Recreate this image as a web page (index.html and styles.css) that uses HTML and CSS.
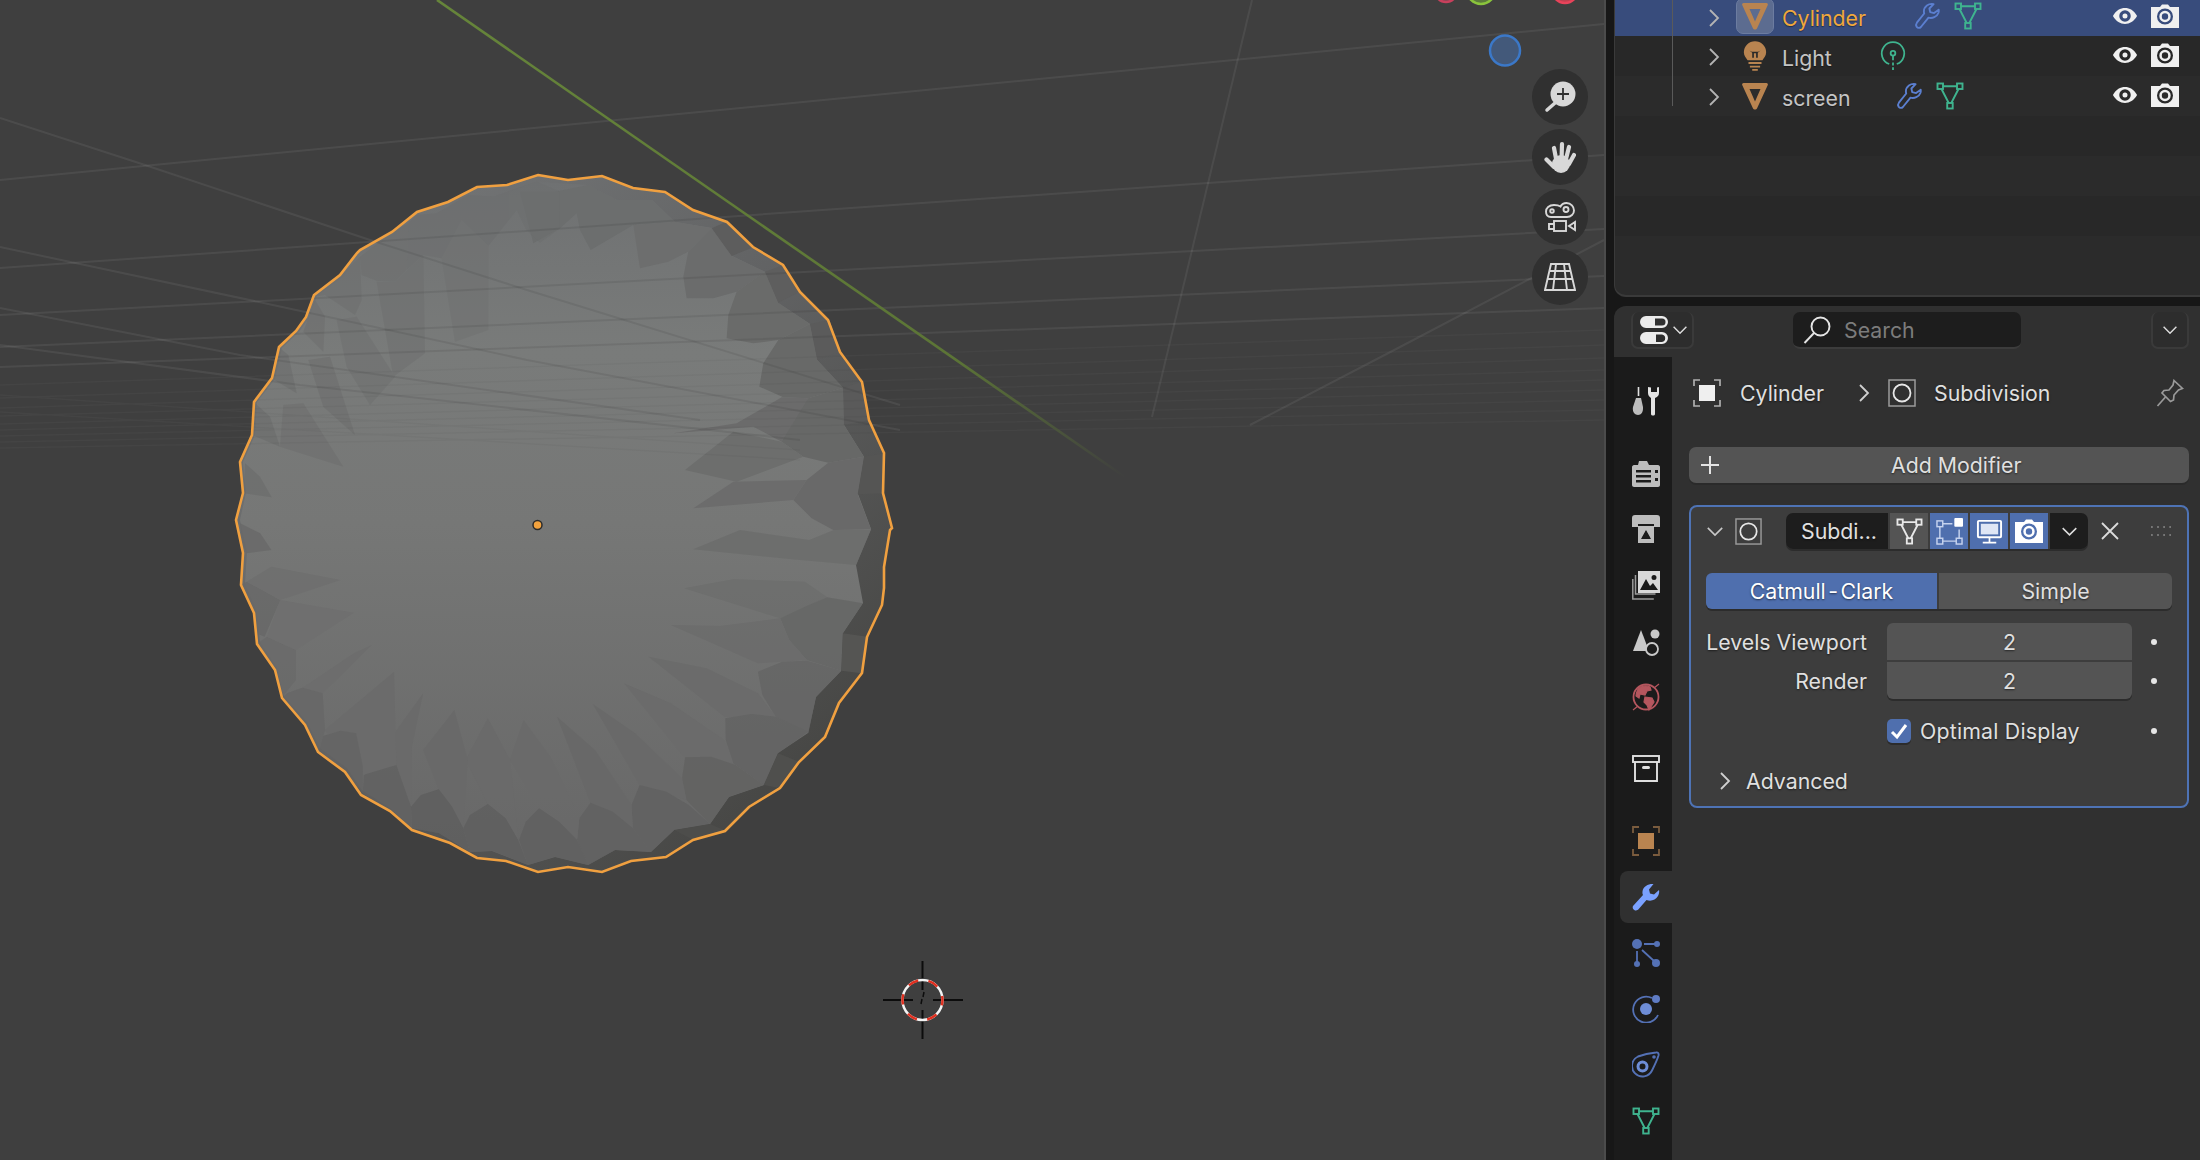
FILE: index.html
```html
<!DOCTYPE html>
<html lang="en">
<head>
<meta charset="utf-8">
<title>Blender</title>
<link rel="stylesheet" href="styles.css">
</head>
<body>
<svg class="defs" width="0" height="0" aria-hidden="true">
  <defs>
    <symbol id="mesh" viewBox="0 0 28 28"><g fill="none" stroke="currentColor" stroke-width="1.9"><rect x="1.5" y="1.5" width="5.5" height="5.5"/><rect x="21" y="1.5" width="5.5" height="5.5"/><rect x="11.2" y="21" width="5.5" height="5.5"/><path d="M7 4.2h14M5.5 7l7.2 14M22.500 7l-7.200 14"/></g></symbol>
    <symbol id="wrench" viewBox="0 0 28 28"><path d="M2.6 24.6c1.2 1.6 3 1.7 4.3.4l7.6-9.3c3.8 1 8.4-.6 10-5 .3-1 .4-2 .2-3l-4.6 3.4-3.9-1-.8-3.6 4.2-4.4c-4.800-1-9.800 2.400-9.700 7.400 0 .8.100 1.300.3 2L2.900 20.700c-.9 1.200-1.100 2.700-.3 3.900z" fill="none" stroke="currentColor" stroke-width="1.9" stroke-linejoin="round"/></symbol>
    <symbol id="tri" viewBox="0 0 28 28"><path fill-rule="evenodd" d="M2.500 1h23c1 0 1.700 1 1.300 2L16.200 26c-.9 2-3.500 2-4.400 0L1.200 3C.800 2 1.500 1 2.500 1zM8.500 7l5.500 12.500L19.500 7z" fill="currentColor"/></symbol>
    <symbol id="chev" viewBox="0 0 12 20"><path d="M2 2l8 8-8 8" fill="none" stroke="currentColor" stroke-width="1.800"/></symbol>
    <symbol id="down" viewBox="0 0 20 12"><path d="M2 2l8 8 8-8" fill="none" stroke="currentColor" stroke-width="1.800"/></symbol>
    <symbol id="eye" viewBox="0 0 28 22"><path fill-rule="evenodd" d="M1 11C4.500 5 9 2.500 14 2.500S23.500 5 27 11c-3.500 6-8 8.500-13 8.500S4.500 17 1 11zM14 4.800a6.200 6.200 0 1 0 0 12.400 6.200 6.200 0 0 0 0-12.400zM14 8.300a2.700 2.700 0 1 1 0 5.400 2.700 2.700 0 0 1 0-5.400z" fill="currentColor"/></symbol>
    <symbol id="cam" viewBox="0 0 28 24"><path fill-rule="evenodd" d="M9 3l2-2.500h6L19 3h9v21H0V3zM14 4.500a8 8 0 1 0 0 16 8 8 0 0 0 0-16zM14 6.800a5.700 5.700 0 1 1 0 11.400 5.700 5.700 0 0 1 0-11.400zM14 9.300a3.200 3.200 0 1 0 0 6.400 3.200 3.200 0 0 0 0-6.400z" fill="currentColor"/></symbol>
    <symbol id="box" viewBox="0 0 28 28"><rect x="1" y="1" width="26" height="26" fill="none" stroke="#9a9a9a" stroke-width="1.500"/><circle cx="14" cy="14" r="8.500" fill="none" stroke="#e6e6e6" stroke-width="1.800"/></symbol>
  </defs>
</svg>

<main class="viewport">
  <svg class="scene" viewBox="0 0 1604 1160" width="1604" height="1160">
    <defs>
      <g id="grid">
        <path d="M0 180L1604 24M0 268L1604 155M0 315L1604 229M0 347L1604 276M0 367L1604 308"/>
        <path d="M0 118L145 165L370 240L527 290L900 405M0 247L259 302L527 360L900 430M0 308L240 355L700 420M0 345L300 385L800 440"/>
        <path d="M1252 0L1152 417M1604 240L1400 347L1250 425"/>
        <path class="faint" d="M0 385L1604 330M0 398L1604 345M0 408L1604 358M0 416L1604 370M0 424L1604 380M0 430L1604 390M0 436L1604 400M0 442L1604 410M0 448L1604 420M0 395L800 450M0 412L800 460"/>
      </g>
      <polygon id="silhouette" points="538,175 568,180 602,176 633,188 665,192 693,210 727,222 753,247 783,265 800,292 828,320 840,352 862,382 869,420 884,453 883,493 892,528 890,530 884,567 884,588 882,605 867,637 862,673 839,703 825,737 799,762 780,788 749,807 725,831 693,840 666,857 631,861 602,872 568,867 538,872 506,861 477,858 450,843 412,830 390,811 361,795 345,772 318,752 305,725 282,698 275,670 257,644 254,613 241,585 243,553 236,520 243,493 240,462 252,435 254,402 272,378 279,347 296,331 306,317 314,295 340,275 357,253 360,250 392,232 417,212 448,202 477,187 507,185"/>
      <clipPath id="clip-disc"><use href="#silhouette"/></clipPath>
      <linearGradient id="rim" x1="0" y1="0.2" x2="0.7" y2="1"><stop offset="0" stop-color="#747677"/><stop offset="0.45" stop-color="#626364"/><stop offset="1" stop-color="#474745"/></linearGradient>
      <linearGradient id="face" x1="0" y1="0" x2="0" y2="1"><stop offset="0" stop-color="#6f7172"/><stop offset="0.25" stop-color="#797b7a"/><stop offset="0.5" stop-color="#767776"/><stop offset="1" stop-color="#676767"/></linearGradient>
      <linearGradient id="axis" gradientUnits="userSpaceOnUse" x1="437" y1="0" x2="1125" y2="477"><stop offset="0" stop-color="#66853a"/><stop offset="0.75" stop-color="#5c7536"/><stop offset="1" stop-color="#3f3f3f"/></linearGradient>
    </defs>

    <use href="#grid" class="grid-under"/>
    <line x1="437" y1="0" x2="1125" y2="477" stroke="url(#axis)" stroke-width="2.600"/>

    <use href="#silhouette" fill="url(#rim)"/>
    <polygon fill="url(#face)" points="588,185 617,200 652,200 675,222 712,228 732,256 765,272 778,303 810,324 817,360 843,388 844,425 864,457 858,494 871,529 856,565 863,603 843,633 841,671 816,697 808,733 778,753 764,785 729,797 710,824 674,830 651,852 615,850 588,865 555,857 528,865 492,851 470,852 439,833 412,828 390,808 362,790 347,768 320,748 307,722 284,696 277,668 260,642 257,612 245,584 247,552 240,520 246,493 243,462 255,435 257,402 275,379 282,348 299,332 309,318 317,296 343,277 360,255 395,235 417,215 437,213 468,195 493,197 537,182"/>

    <!-- right upper petals, crop coordinates -->
    <g transform="translate(540 160) scale(.3333)">
      <polygon fill="#6c6e6e" points="-60,95 45,95 145,75 230,120 335,120 405,185 280,195 152,270 120,210 110,160 60,205 -20,250"/>
      <polygon fill="#6d6e6e" points="280,195 300,325 385,305 445,275 515,205 405,185"/>
      <polygon fill="#6b6c6c" points="445,275 430,350 440,415 520,415 590,395 675,335 575,288 515,205"/>
      <polygon fill="#6a6b6a" points="590,395 565,465 560,535 640,550 715,540 810,492 715,428 675,335"/>
      <polygon fill="#686968" points="715,540 670,610 658,680 730,712 805,715 910,683 832,600 810,492"/>
      <polygon fill="#676867" points="805,715 750,780 725,845 790,890 865,908 972,890 912,795 910,683"/>
      <polygon fill="#6b6b6b" points="590,790 725,712 805,715 725,845 640,800 400,820"/>
      <polygon fill="#696969" points="865,908 800,960 760,1020 815,1075 880,1110 993,1108 953,1003 972,890"/>
      <polygon fill="#6d6e6d" points="435,930 580,815 725,845 790,890 590,965"/>
      <polygon fill="#6c6c6c" points="460,1045 580,965 800,960 760,1020"/>
      <polygon fill="#5b5b5b" points="810,492 868,480 900,575 832,600"/>
      <polygon fill="#5a5a5a" points="910,683 965,665 988,780 912,795"/>
      <polygon fill="#555554" points="972,890 1032,880 1030,1000 953,1003"/>
      <polygon fill="#5d5d5d" points="515,205 560,185 640,262 575,288"/>
      <polygon fill="#5e5e5e" points="675,335 730,315 780,395 715,428"/>
    </g>

    <!-- lower petals -->
    <g transform="translate(220 520) scale(.4464 .3333)" opacity=".8">
      <polygon fill="#6c6d6c" points="1060,88 1165,30 1320,60 1375,30 1458,30 1425,135 1282,118"/>
      <polygon fill="#6d6e6d" points="1040,205 1150,178 1310,185 1360,232 1255,295"/>
      <polygon fill="#656665" points="1255,295 1310,260 1360,232 1440,250 1395,340 1392,452 1315,420 1275,360"/>
      <polygon fill="#6c6c6c" points="1010,315 1120,318 1255,295 1275,360 1315,420 1205,430"/>
      <polygon fill="#656565" points="1205,455 1260,425 1315,422 1392,452 1335,530 1318,640 1245,590 1215,525"/>
      <polygon fill="#6b6b6b" points="960,410 1090,445 1205,520 1245,590 1130,590"/>
      <polygon fill="#636363" points="1132,595 1190,582 1245,590 1318,635 1250,700 1218,795 1150,730 1133,660"/>
      <polygon fill="#6b6b6b" points="905,490 1010,550 1130,660 1150,730 1040,712"/>
      <polygon fill="#626261" points="1042,712 1100,710 1155,735 1218,795 1140,830 1098,912 1045,840 1035,775"/>
      <polygon fill="#696969" points="835,552 930,640 1035,775 1045,840 940,795"/>
      <polygon fill="#616161" points="940,795 1000,815 1050,855 1098,912 1018,930 965,995 925,925 922,855"/>
      <polygon fill="#686868" points="755,590 840,690 922,855 925,925 830,848"/>
      <polygon fill="#616161" points="830,848 880,875 925,925 965,995 885,990 825,1035 800,960 805,895"/>
      <polygon fill="#6a6a6a" points="680,600 740,710 805,895 800,960 715,865 650,720"/>
      <polygon fill="#606060" points="715,865 760,905 800,960 825,1035 750,1010 690,1035 670,960 685,905"/>
      <polygon fill="#6a6a6a" points="600,595 650,720 668,960 600,852 550,720"/>
      <polygon fill="#5f5f5f" points="600,852 640,895 668,960 690,1035 610,992 560,997 545,925 560,885"/>
      <polygon fill="#696969" points="525,570 555,720 545,925 490,808 455,690"/>
      <polygon fill="#5e5e5e" points="490,808 520,860 545,925 560,997 490,940 430,925 428,860 450,825"/>
      <polygon fill="#6a6a6a" points="455,520 430,680 428,860 395,735 385,650"/>
      <polygon fill="#616161" points="395,735 420,830 428,860 430,925 380,872 320,820 322,765 350,745"/>
      <polygon fill="#6b6b6b" points="390,455 395,735 320,765 235,630"/>
      <polygon fill="#646464" points="270,632 305,640 320,740 320,820 280,755 220,697 225,650"/>
      <polygon fill="#6d6d6d" points="340,375 230,520 150,520 185,503 300,400"/>
      <polygon fill="#676767" points="185,503 230,520 235,630 222,695 190,615 138,535 150,520"/>
      <polygon fill="#6a6a6a" points="105,350 170,390 170,480 140,530 122,450 82,372"/>
      <polygon fill="#6f6f6f" points="300,278 170,390 105,350 135,240"/>
      <polygon fill="#686868" points="60,185 135,240 100,350 80,340 75,280 47,195"/>
      <polygon fill="#6f6f6f" points="270,180 135,240 60,185 115,140"/>
      <polygon fill="#696969" points="45,10 90,40 115,90 60,100 50,70"/>
    </g>
    <g transform="translate(220 520) scale(.4464 .3333)">
      <polygon fill="#555553" points="1395,340 1450,350 1437,460 1392,452"/>
      <polygon fill="#4f4f4d" points="1250,700 1297,725 1255,805 1218,795"/>
      <polygon fill="#4d4d4b" points="1098,912 1132,932 1060,960 1018,930"/>
    </g>

    <!-- upper left -->
    <g transform="translate(220 160) scale(.3333)" opacity=".5">
      <polygon fill="#6c6d6e" points="565,190 590,165 650,160 745,105 820,110 950,65 1020,95 1020,205 960,248 918,208 890,150 805,258 725,180 665,295 610,285 560,330"/>
      <polygon fill="#6d6e6e" points="420,290 515,220 565,190 560,330 525,365 470,362 425,345"/>
      <polygon fill="#6d6e6e" points="285,410 370,340 420,290 425,420 405,465 315,405"/>
      <polygon fill="#6e6f6f" points="470,365 525,365 610,285 615,580 520,650"/>
      <polygon fill="#707171" points="665,295 725,180 805,258 805,510 705,545"/>
      <polygon fill="#6d6d6d" points="285,420 315,470 310,575 250,515"/>
      <polygon fill="#6e6f6f" points="350,480 410,470 525,650 450,735 380,620"/>
      <polygon fill="#6a6b6b" points="180,565 205,585 230,700 155,655"/>
      <polygon fill="#6c6c6c" points="265,600 330,590 405,825 310,740"/>
      <polygon fill="#696a6a" points="105,730 150,770 180,860 97,825"/>
      <polygon fill="#6d6d6d" points="190,735 250,730 370,920 180,860"/>
      <polygon fill="#686969" points="75,910 120,950 155,1012 72,1000"/>
    </g>

    <use href="#grid" class="grid-over" clip-path="url(#clip-disc)"/>
    <use href="#silhouette" class="outline"/>

    <circle cx="537.500" cy="525" r="4.500" fill="#f2a23e" stroke="#2a2a2a" stroke-width="1.500"/>

    <!-- 3D cursor -->
    <g>
      <path d="M883 1000h30M933 1000h30M922.500 961v29M922.500 1010v29" stroke="#0c0c0c" stroke-width="2" fill="none"/>
      <path d="M921 1004l1-5M923 997l1-5" stroke="#0c0c0c" stroke-width="1.500" fill="none"/>
      <circle cx="922.500" cy="1000" r="20" fill="none" stroke="#f4f4f4" stroke-width="2.500"/>
      <circle cx="922.500" cy="1000" r="20" fill="none" stroke="#e03020" stroke-width="2.500" stroke-dasharray="10.470 10.470" stroke-dashoffset="5"/>
    </g>

    <!-- orientation gizmo -->
    <circle cx="1446" cy="-9" r="11" fill="#7a4452" stroke="#c8405c" stroke-width="2.500"/>
    <circle cx="1481" cy="-10" r="14" fill="#5c7a3c" stroke="#8ac43c" stroke-width="2.500"/>
    <circle cx="1565" cy="-10" r="13" fill="#c04050" stroke="#e8435a" stroke-width="2.500"/>
    <circle cx="1505" cy="50.500" r="15" fill="#43597a" stroke="#3b78c8" stroke-width="2.500"/>
  </svg>

  <div class="nav-gizmos">
    <div class="nav-btn"><svg viewBox="0 0 32 32" width="32" height="32"><path d="M3 29l8-7" stroke="#d8d8d8" stroke-width="3.500" stroke-linecap="round"/><circle cx="19" cy="13" r="12.500" fill="#d8d8d8"/><path d="M19 7v12M13 13h12" stroke="#2f2f2f" stroke-width="1.800"/></svg></div>
    <div class="nav-btn"><svg viewBox="0 0 32 32" width="32" height="32"><g fill="none" stroke="#d8d8d8" stroke-width="4.200" stroke-linecap="round"><path d="M10 7l2.500 13M18 3l-.5 17M25 6l-3.500 14M30 14l-5 9M2.500 18.500L10 26"/></g><circle cx="17" cy="23" r="9" fill="#d8d8d8"/></svg></div>
    <div class="nav-btn"><svg viewBox="0 0 32 32" width="32" height="32"><g fill="none" stroke="#d8d8d8" stroke-width="1.900"><path d="M7 16h16c4 0 7-3 7-6.500S27 2 22.500 2c-3 0-5 1.500-6 3.500C15 4.500 13 4 10 4 5 4 2 7 2 10.500S4 16 7 16z"/><circle cx="8" cy="10" r="1.800"/><circle cx="22" cy="8.500" r="2.500"/><rect x="10" y="20" width="12" height="10"/><path d="M10 23H5v5h5M31 21v8l-6-4z"/></g></svg></div>
    <div class="nav-btn"><svg viewBox="0 0 32 32" width="32" height="32"><g fill="none" stroke="#d8d8d8" stroke-width="1.900"><path d="M7 3h18l6 26H1zM5 10h22M3 18h26M12 3l-3 26M20 3l3 26"/></g></svg></div>
  </div>
</main>

<aside class="sidebar">
  <section class="outliner">
    <span class="tree-line"></span>
    <div class="row row-active">
      <svg class="chev"><use href="#chev"/></svg>
      <span class="obj-icon obj-active"><svg class="tri"><use href="#tri"/></svg></span>
      <span class="name name-active">Cylinder</span>
      <svg class="mini wrench gap-cyl"><use href="#wrench"/></svg>
      <svg class="mini mesh gap-mesh"><use href="#mesh"/></svg>
      <span class="vis"><svg class="eye"><use href="#eye"/></svg><svg class="cam"><use href="#cam"/></svg></span>
    </div>
    <div class="row">
      <svg class="chev"><use href="#chev"/></svg>
      <span class="obj-icon"><svg viewBox="0 0 28 32" width="26" height="30"><path fill-rule="evenodd" fill="#b98450" d="M14 0a12 12 0 0 1 12 12c0 4-2.500 6-4 8.500H6C4.500 18 2 16 2 12A12 12 0 0 1 14 0zM8 10l3 2.500V18h1.800v-5h2.400v5H17v-5.500L20 10l-2.500 1.300h-7z"/><path d="M7 22.500h14v2H7zM8.500 26.500h11v2h-11zM11 30h6v2h-6z" fill="#b98450"/></svg></span>
      <span class="name">Light</span>
      <svg class="mini gap-light" viewBox="0 0 28 32"><g fill="none" stroke="#3fb48f" stroke-width="1.900"><path d="M10 24.500a12 12 0 1 1 8 0"/><circle cx="14" cy="13" r="2.500"/><path d="M14 15.500v5M14 23v3M14 28v3"/></g></svg>
      <span class="vis"><svg class="eye"><use href="#eye"/></svg><svg class="cam"><use href="#cam"/></svg></span>
    </div>
    <div class="row">
      <svg class="chev"><use href="#chev"/></svg>
      <span class="obj-icon"><svg class="tri"><use href="#tri"/></svg></span>
      <span class="name">screen</span>
      <svg class="mini wrench gap-scr"><use href="#wrench"/></svg>
      <svg class="mini mesh gap-mesh"><use href="#mesh"/></svg>
      <span class="vis"><svg class="eye"><use href="#eye"/></svg><svg class="cam"><use href="#cam"/></svg></span>
    </div>
    <div class="row"></div>
    <div class="row"></div>
    <div class="row"></div>
    <div class="row"></div>
  </section>

  <section class="properties">
    <header class="prop-header">
      <div class="editor-btn">
        <svg viewBox="0 0 28 30" width="28" height="30"><path fill-rule="evenodd" fill="#ececec" d="M6 1h16a6 6 0 0 1 0 12H6A6 6 0 0 1 6 1zM6 17h16a6 6 0 0 1 0 12H6a6 6 0 0 1 0-12zM16 19.500v7.500h6a3.800 3.800 0 0 0 0-7.500z"/><path d="M15 3.500h7a3.500 3.500 0 0 1 0 7h-7z" fill="#303030"/></svg>
        <svg class="tiny-down"><use href="#down"/></svg>
      </div>
      <div class="search">
        <svg viewBox="0 0 28 28" width="28" height="28"><g fill="none" stroke="#e4e4e4" stroke-width="1.900"><circle cx="17.500" cy="10.500" r="9"/><path d="M11 17L1.500 27"/></g></svg>
        <span class="search-text">Search</span>
      </div>
      <div class="options-btn"><svg class="tiny-down"><use href="#down"/></svg></div>
    </header>

    <div class="prop-body">
      <nav class="tabs">
        <div class="tab"><svg viewBox="0 0 28 30" width="28" height="30"><path d="M6.500 1v9" stroke="#e0e0e0" stroke-width="1.600"/><path d="M4 12h5l2 9c.5 5-2 8-5 8s-6-3-5-8z" fill="#bdbdbd"/><path d="M16 1v6c0 3 2 4 3 5v16c0 2 4 2 4 0V12c2-1 4-2 4-5V1l-2 .5V6h-6V1.500z" fill="#e4e4e4"/></svg></div>
        <div class="tab tab-sep"><svg viewBox="0 0 28 30" width="28" height="30"><path fill-rule="evenodd" fill="#bdbdbd" d="M2 7h4l1-4h8l2 4h9c1 0 2 1 2 2v18c0 1-1 2-2 2H2c-1 0-2-1-2-2V9c0-1 1-2 2-2zM4 12v2.500h15V12zM4 17v2.500h15V17zM4 22v2.500h15V22zM23 12v3h3v-3zM23 20v3h3v-3z"/></svg></div>
        <div class="tab"><svg viewBox="0 0 28 30" width="28" height="30"><path fill-rule="evenodd" fill="#bdbdbd" d="M3 1h22c2 0 3 1 3 3v9h-6v-3H6v3H0V4c0-2 1-3 3-3zM6 12h16v17H6zM14 16l-5 9h10z"/><path d="M14 17l4 7h-8z" fill="#1c1c1c"/></svg></div>
        <div class="tab"><svg viewBox="0 0 28 30" width="28" height="30"><g fill="none" stroke="#9a9a9a" stroke-width="1.500"><path d="M3.500 5v19h20M.8 9v20h21"/></g><path fill-rule="evenodd" fill="#d8d8d8" d="M6 1h22v22H6zM22 5a2.500 2.500 0 1 0 0 5 2.500 2.500 0 0 0 0-5zM8 20h18l-5-7-3 3-4-7z"/></svg></div>
        <div class="tab"><svg viewBox="0 0 28 30" width="28" height="30"><path d="M9 4L1 25h16z" fill="#c9c9c9"/><circle cx="23" cy="8" r="4.500" fill="#c9c9c9"/><circle cx="20" cy="23" r="6" fill="#1c1c1c" stroke="#c9c9c9" stroke-width="1.800"/></svg></div>
        <div class="tab"><svg viewBox="0 0 28 30" width="28" height="30"><circle cx="14" cy="15" r="12.500" fill="none" stroke="#b5565e" stroke-width="1.800"/><path d="M6 7c3-3 8-4 12-2l1 3-4 1-2 4-5-1-1 4-3-2c0-3 1-5 2-7zM13 15l7 1 2 4-5 8-2-5-3-3zM22 6l5-4M6 24l-5 4" fill="#b5565e" stroke="#b5565e" stroke-width="1.200"/></svg></div>
        <div class="tab tab-sep"><svg viewBox="0 0 28 30" width="28" height="30"><g fill="none" stroke="#e0e0e0" stroke-width="1.900"><rect x="1" y="2" width="26" height="6"/><path d="M3 8v19h22V8"/></g><rect x="10" y="12" width="8" height="3" rx="1.500" fill="#e0e0e0"/></svg></div>
        <div class="tab tab-sep"><svg viewBox="0 0 28 30" width="28" height="30"><path d="M1 7V1h6M21 1h6v6M27 23v6h-6M7 29H1v-6" fill="none" stroke="#7b5c3e" stroke-width="1.800"/><rect x="6" y="7" width="16" height="16" fill="#b98450"/></svg></div>
        <div class="tab tab-active"><svg viewBox="0 0 28 28" width="28" height="28"><path d="M1 23c-1 2 .5 4.500 3 4.500 1 0 2-.5 2.500-1.200l8-9.300c4 1.500 9 .5 11.500-4 1-2 1.500-4 1-6l-5 4.500-4-1-1-4 4.500-5.500C17 .5 11 3 10.500 8.500c-.2 1.500 0 2.500.5 3.500z" fill="#7aa1ff"/></svg></div>
        <div class="tab"><svg viewBox="0 0 28 28" width="28" height="28"><g fill="#5471b5"><circle cx="5" cy="5" r="5"/><circle cx="25" cy="5" r="3"/><circle cx="5" cy="25" r="3"/><circle cx="24" cy="24" r="4"/></g><path d="M12 5h11M5 12v12M10 11l12 11" stroke="#5471b5" stroke-width="1.800" fill="none"/></svg></div>
        <div class="tab"><svg viewBox="0 0 28 28" width="28" height="28"><path d="M20 3A13 13 0 1 0 26 20" fill="none" stroke="#5471b5" stroke-width="1.800"/><circle cx="14" cy="14" r="6" fill="#6e8dd6"/><circle cx="24" cy="4" r="4" fill="#5f7cc4"/></svg></div>
        <div class="tab"><svg viewBox="0 0 28 28" width="28" height="28"><path d="M24 1.500c2-.5 3 1 2.500 3-1.500 5-4 10-6.500 15a10.500 10.500 0 1 1-14-14c5-2 12-3.500 18-4z" fill="none" stroke="#5471b5" stroke-width="1.900"/><circle cx="10.500" cy="15.500" r="4.500" fill="none" stroke="#6e8dd6" stroke-width="3"/><circle cx="22" cy="6" r="1.800" fill="#5471b5"/></svg></div>
        <div class="tab"><svg class="tab-mesh"><use href="#mesh"/></svg></div>
      </nav>

      <div class="content">
        <div class="crumbs">
          <svg viewBox="0 0 28 28" width="28" height="28"><path d="M1 7V1h6M21 1h6v6M27 21v6h-6M7 27H1v-6" fill="none" stroke="#b0b0b0" stroke-width="1.700"/><rect x="6" y="6" width="16" height="16" fill="#efefef"/></svg>
          <span class="crumb-a">Cylinder</span>
          <svg class="crumb-chev"><use href="#chev"/></svg>
          <svg class="box"><use href="#box"/></svg>
          <span class="crumb-b">Subdivision</span>
          <svg class="pin" viewBox="0 0 28 28" width="28" height="28"><g fill="none" stroke="#9a9a9a" stroke-width="1.700"><path d="M18 1.500l8.500 8-4 1.500-4.500 5-.5 5-3 1.500L6 14l2-2.500 5-.5 4-5z"/><path d="M9.500 18L1.500 27"/></g></svg>
        </div>

        <div class="add-btn">
          <svg viewBox="0 0 18 18" width="18" height="18"><path d="M9 0v18M0 9h18" stroke="#e4e4e4" stroke-width="2"/></svg>
          <span>Add Modifier</span>
        </div>

        <div class="modifier">
          <div class="mod-head">
            <svg class="mod-down"><use href="#down"/></svg>
            <svg class="box mod-box"><use href="#box"/></svg>
            <div class="mod-strip">
              <span class="mod-name">Subdi...</span>
              <span class="mod-tog"><svg class="tog-mesh"><use href="#mesh"/></svg></span>
              <span class="mod-tog on"><svg viewBox="0 0 28 28" width="27" height="27"><g fill="none" stroke="#c5d2ee" stroke-width="1.500"><rect x="1" y="3" width="6" height="6"/><rect x="1" y="21" width="6" height="6"/><rect x="21" y="21" width="6" height="6"/><path d="M7 6h10M4 9v12M7 24h14M24 12v9"/></g><rect x="19" y="0" width="9" height="9" rx="1" fill="#fff"/></svg></span>
              <span class="mod-tog on"><svg viewBox="0 0 28 28" width="27" height="27"><rect x="2" y="3" width="24" height="17" rx="1" fill="none" stroke="#fff" stroke-width="2"/><rect x="5" y="6" width="18" height="11" fill="#dfe6f5"/><path d="M14 20v5M7 25.500h14" stroke="#fff" stroke-width="1.800"/></svg></span>
              <span class="mod-tog on"><svg class="tog-cam"><use href="#cam"/></svg></span>
              <span class="mod-drop"><svg class="mod-chev"><use href="#down"/></svg></span>
            </div>
            <svg class="mod-x" viewBox="0 0 18 18" width="18" height="18"><path d="M1 1l16 16M17 1L1 17" stroke="#dcdcdc" stroke-width="1.800"/></svg>
            <svg class="mod-dots" viewBox="0 0 20 10" width="20" height="10"><path d="M0 1h20M0 9h20" stroke="#8a8a8a" stroke-width="1.600" stroke-dasharray="1.800 4.300"/></svg>
          </div>

          <div class="seg">
            <span class="seg-item seg-on"><span>Catmull<span class="hy">-</span>Clark</span></span>
            <span class="seg-item">Simple</span>
          </div>

          <div class="field-grid">
            <span class="label">Levels Viewport</span>
            <span class="num num-top">2</span>
            <span class="dot"></span>
            <span class="label">Render</span>
            <span class="num num-bot">2</span>
            <span class="dot"></span>
          </div>

          <div class="check-row">
            <span class="check"><svg viewBox="0 0 24 24" width="24" height="24"><path d="M5 13l5 5 9-12" fill="none" stroke="#fff" stroke-width="3"/></svg></span>
            <span class="check-label">Optimal Display</span>
            <span class="dot check-dot"></span>
          </div>

          <div class="advanced">
            <svg class="adv-chev"><use href="#chev"/></svg>
            <span>Advanced</span>
          </div>
        </div>
      </div>
    </div>
  </section>
</aside>
</body>
</html>
```
FILE: styles.css
```css
* { box-sizing: border-box; }
html, body { margin: 0; height: 100%; }
body {
  display: flex;
  width: 2200px;
  height: 1160px;
  overflow: hidden;
  background: #181818;
  font-family: Inter, "Liberation Sans", sans-serif;
  font-size: 21.3px;
  color: #e0e0e0;
}
.defs { position: absolute; }
svg { display: block; flex: none; }

/* viewport */
.viewport { position: relative; width: 1604px; height: 1160px; background: #3f3f3f; flex: none; }
.scene { position: absolute; inset: 0; }
.grid-under { fill: none; stroke: rgba(255,255,255,.065); stroke-width: 2; }
.grid-over { fill: none; stroke: rgba(0,0,0,.075); stroke-width: 2; }
.faint { stroke-opacity: .4; stroke-width: 1.5; }
.outline { fill: none; stroke: #f0a040; stroke-width: 2.600; stroke-linejoin: miter; }
.nav-gizmos { position: absolute; top: 69px; left: 1532px; display: flex; flex-direction: column; gap: 4px; }
.nav-btn { width: 56px; height: 56px; border-radius: 50%; background: #303030; display: flex; align-items: center; justify-content: center; }

/* sidebar */
.sidebar { flex: none; width: 596px; height: 1160px; border-left: 2px solid #4b4b4b; padding-left: 8px; display: flex; flex-direction: column; gap: 9px; background: #171717; }

.outliner { position: relative; height: 297px; background: #2b2b2b; border-bottom: 2px solid #3a3a3a; border-left: 1px solid #3a3a3a; border-bottom-left-radius: 12px; overflow: hidden; flex: none; }
.tree-line { position: absolute; left: 57px; top: 0; width: 1px; height: 106px; background: #5a5a5a; }
.row { height: 40px; display: flex; align-items: center; padding-left: 93px; }
.row:nth-child(odd) { background: #282828; }
.row.row-active { height: 36px; background: #384c7c; }
.chev { width: 12px; height: 20px; color: #b4b4b4; margin-top: 2px; }
.row-active .chev { margin-top: 0; }
.obj-icon { width: 38px; height: 36px; margin-left: 16px; display: flex; align-items: center; justify-content: center; border-radius: 7px; }
.obj-active { background: #5c6c90; border: 1px solid #6c7ca0; margin-top: -4px; }
.tri { width: 28px; height: 30px; color: #b98450; }
.name { margin-left: 8px; color: #c4c4c4; text-shadow: 0 1px 1px rgba(0,0,0,.4); margin-top: 3px; }
.name-active { color: #f0a83c; margin-top: 0; }
.mini { width: 28px; height: 30px; margin-top: 0; }
.row-active .mini { margin-top: -4px; }
.wrench { color: #5b7fd0; }
.mesh { color: #3fb48f; }
.gap-cyl { margin-left: 48px; }
.gap-mesh { margin-left: 12px; }
.gap-light { margin-left: 47px; }
.gap-scr { margin-left: 45px; }
.vis { position: absolute; left: 497px; display: flex; gap: 13px; margin-top: -1px; }
.row-active .vis { margin-top: -4px; }
.eye { width: 26px; height: 22px; color: #f0f0f0; }
.cam { width: 28px; height: 24px; color: #f0f0f0; margin-top: -1px; }

.properties { flex: 1; min-height: 0; background: #303030; border-top-left-radius: 12px; display: flex; flex-direction: column; overflow: hidden; }
.prop-header { height: 51px; flex: none; display: flex; padding-top: 6px; position: relative; }
.editor-btn { margin-left: 17px; width: 63px; height: 37px; border-radius: 7px; background: #2d2d2d; border: 2px solid #3a3a3a; border-top: 0; display: flex; align-items: center; padding-left: 7px; gap: 4px; }
.tiny-down { width: 16px; height: 10px; color: #dcdcdc; }
.search { margin-left: 99px; width: 228px; height: 37px; border-radius: 7px; background: #1d1d1d; border-bottom: 2px solid #3c3c3c; display: flex; align-items: center; padding-left: 10px; gap: 13px; color: #7c7c7c; }
.search-text { margin-top: 1px; }
.options-btn { margin-left: 130px; width: 38px; height: 37px; border-radius: 7px; background: #2d2d2d; border: 2px solid #3a3a3a; border-top: 0; display: flex; align-items: center; justify-content: center; }

.prop-body { flex: 1; display: flex; min-height: 0; }
.tabs { width: 58px; flex: none; background: #1b1b1b; padding: 18px 0 0 6px; }
.tab { width: 52px; height: 52px; margin-bottom: 4px; display: flex; align-items: center; justify-content: center; }
.tab-sep { margin-top: 20px; }
.tab-active { background: #303030; border-radius: 8px 0 0 8px; }
.tab-mesh { width: 28px; height: 28px; color: #3fb48f; }

.content { flex: 1; min-width: 0; padding: 16px 11px 0 17px; }
.crumbs { height: 40px; display: flex; align-items: center; padding-left: 4px; position: relative; }
.crumb-a { margin-left: 19px; }
.crumb-chev { width: 12px; height: 20px; margin-left: 34px; color: #d0d0d0; }
.box { width: 28px; height: 28px; }
.crumbs .box { margin-left: 18px; }
.crumb-b { margin-left: 18px; }
.pin { position: absolute; left: 467px; }
.crumbs span, .add-btn span, .label, .num, .seg-item, .mod-name, .check-label, .advanced span { text-shadow: 0 1px 2px rgba(0,0,0,.55); }

.add-btn { margin-top: 34px; height: 36px; background: #545454; border-radius: 7px; box-shadow: 0 2px 0 #2a2a2a; display: flex; align-items: center; padding-left: 12px; }
.add-btn span { margin-left: 172px; }

.modifier { position: relative; margin-top: 22px; height: 303px; background: #3d3d3d; border: 2px solid #4e73b5; border-radius: 8px; padding: 6px 0 0 0; }
.mod-head { height: 36px; display: flex; align-items: center; padding-left: 15px; }
.mod-down { width: 18px; height: 11px; color: #c8c8c8; }
.mod-box { margin-left: 11px; width: 27px; height: 27px; }
.mod-strip { margin-left: 24px; height: 36px; display: flex; gap: 2px; border-radius: 7px; overflow: hidden; box-shadow: 0 2px 0 #2c2c2c; }
.mod-name { width: 102px; background: #1d1d1d; display: flex; align-items: center; padding-left: 15px; }
.mod-tog { width: 38px; background: #545454; display: flex; align-items: center; justify-content: center; }
.mod-tog.on { background: #4f6fae; }
.tog-mesh { width: 27px; height: 27px; color: #e8e8e8; }
.tog-cam { width: 28px; height: 24px; color: #fff; }
.mod-drop { width: 38px; background: #1d1d1d; display: flex; align-items: center; justify-content: center; }
.mod-chev { width: 17px; height: 11px; color: #dcdcdc; }
.mod-x { margin-left: 13px; }
.mod-dots { margin-left: 32px; }

.seg { margin: 24px 15px 0; height: 36px; display: flex; gap: 2px; border-radius: 6px; overflow: hidden; box-shadow: 0 2px 0 #2c2c2c; }
.seg-item { flex: 233 1 0; background: #545454; display: flex; align-items: center; justify-content: center; }
.seg-on { flex: 231 1 0; background: #4f6fae; color: #fff; }
.hy { margin: 0 2.500px; }

.field-grid { margin-top: 14px; display: grid; grid-template-columns: 161px 245px 44px; column-gap: 20px; row-gap: 2px; padding-left: 15px; grid-auto-rows: 37px; align-items: center; }
.field-grid .dot { margin-left: -1px; }
.label { text-align: right; white-space: nowrap; }
.num { height: 37px; background: #545454; display: flex; align-items: center; justify-content: center; }
.num-top { border-radius: 6px 6px 0 0; }
.num-bot { border-radius: 0 0 6px 6px; box-shadow: 0 2px 0 #2c2c2c; }
.dot { width: 6px; height: 6px; border-radius: 50%; background: #e6e6e6; }

.check-row { margin-top: 20px; height: 24px; display: flex; align-items: center; padding-left: 196px; }
.check { width: 24px; height: 24px; border-radius: 5px; background: #4f6fae; box-shadow: 0 2px 0 #2c2c2c; }
.check-label { margin-left: 9px; letter-spacing: .2px; }
.check-dot { position: absolute; left: 460px; }
.advanced { margin-top: 26px; height: 24px; display: flex; align-items: center; padding-left: 28px; }
.adv-chev { width: 12px; height: 20px; color: #d0d0d0; }
.advanced span { margin-left: 15px; }
```
